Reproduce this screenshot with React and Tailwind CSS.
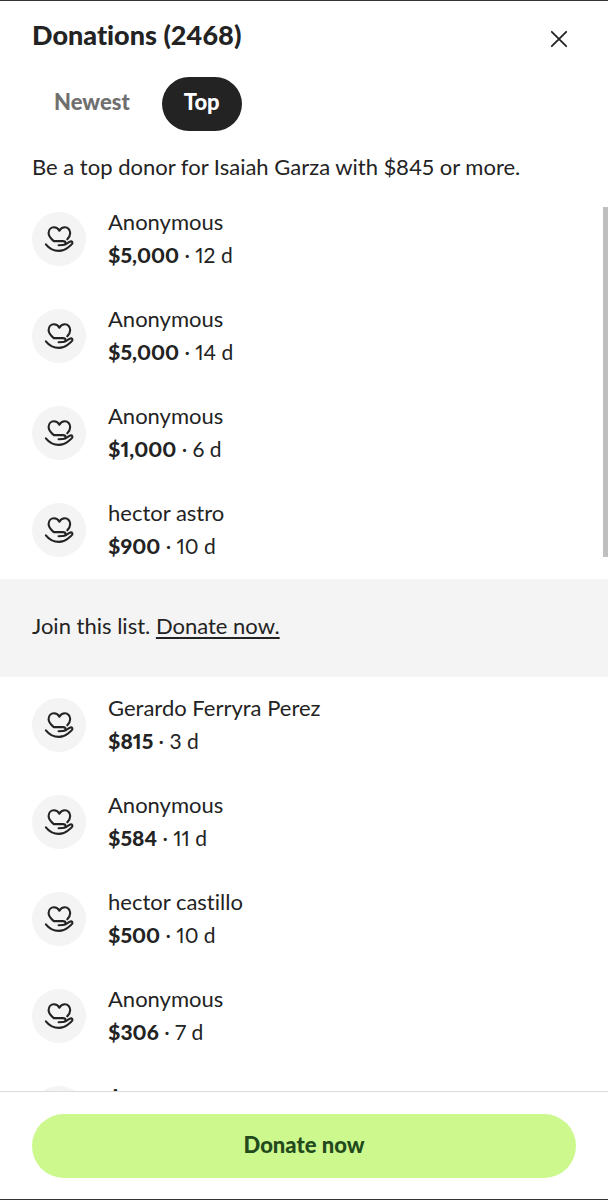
import React, { useState } from "react";

const topDonations = [
  { id: 1, name: "Anonymous", amount: "$5,000", age: "12 d" },
  { id: 2, name: "Anonymous", amount: "$5,000", age: "14 d" },
  { id: 3, name: "Anonymous", amount: "$1,000", age: "6 d" },
  { id: 4, name: "hector astro", amount: "$900", age: "10 d" },
];

const otherDonations = [
  { id: 5, name: "Gerardo Ferryra Perez", amount: "$815", age: "3 d" },
  { id: 6, name: "Anonymous", amount: "$584", age: "11 d" },
  { id: 7, name: "hector castillo", amount: "$500", age: "10 d" },
  { id: 8, name: "Anonymous", amount: "$306", age: "7 d" },
  { id: 9, name: "Anonymous", amount: "$300", age: "9 d" },
];

function HeartHandIcon() {
  return (
    <svg
      viewBox="0 0 32 32"
      className="size-8"
      fill="none"
      stroke="currentColor"
      strokeWidth="2.1"
      strokeLinecap="round"
      strokeLinejoin="round"
      aria-hidden="true"
    >
      <path d="M24.300 16.300c1.900-2 2.900-3.700 2.900-6.200 0-3.400-2.300-5.800-5.300-5.800-2.300 0-4.400 1.300-5.500 3.400-1.100-2.100-3.200-3.400-5.500-3.400-3 0-5.300 2.400-5.300 5.800 0 3.200 2 5.500 5.200 8h9c1.900 0 2.800.7 2.800 1.900s-1 1.900-2.700 2l-4.300.2" />
      <path d="M22.800 21.100l3.700-2.300c1.300-.7 2.400-.6 2.800.3.400.9 0 1.800-1 2.600l-3.600 3c-2.600 2.100-5.200 3.200-8.700 3.200-5.600 0-9.700-2.300-13.100-6.600" />
    </svg>
  );
}

function CloseIcon() {
  return (
    <svg viewBox="0 0 24 24" className="size-6" fill="none" stroke="currentColor" strokeWidth="1.8" strokeLinecap="round" aria-hidden="true">
      <path d="M4.800 4.800l14.400 14.400M19.200 4.800l-14.400 14.400" />
    </svg>
  );
}

function DonationRow({ donation }) {
  return (
    <li className="flex min-h-[97px] items-center gap-[22px] px-8 pb-[2px]">
      <span className="flex size-[54px] shrink-0 items-center justify-center rounded-full bg-[#f4f4f4]">
        <HeartHandIcon />
      </span>
      <div className="pb-[2px] leading-[33px]">
        <p>{donation.name}</p>
        <p className="text-[21px] leading-[33px]">
          <strong className="font-black">{donation.amount}</strong> · {donation.age}
        </p>
      </div>
    </li>
  );
}

function DonationList({ donations }) {
  return (
    <ul>
      {donations.map((donation) => (
        <DonationRow key={donation.id} donation={donation} />
      ))}
    </ul>
  );
}

function TabButton({ active, onClick, children }) {
  return (
    <button
      type="button"
      aria-pressed={active}
      onClick={onClick}
      className={`rounded-full px-[22px] pb-1 leading-[50px] font-black ${
        active ? "bg-[#232323] text-white" : "text-[#6f6f6f]"
      }`}
    >
      {children}
    </button>
  );
}

function App() {
  const [tab, setTab] = useState("top");

  return (
    <div className="flex h-screen flex-col border-t border-b border-[#333] bg-white font-['Lato',sans-serif] text-[22px] text-[#232323] proportional-nums [font-variant-ligatures:none]">
      <header className="flex items-center justify-between px-8 pt-[18px]">
        <h1 className="self-start text-[27px] leading-8 font-black">Donations (2468)</h1>
        <button type="button" aria-label="Close" className="px-[5px] py-2">
          <CloseIcon />
        </button>
      </header>

      <div className="flex gap-[10px] px-8 pt-[18px]">
        <TabButton active={tab === "newest"} onClick={() => setTab("newest")}>
          Newest
        </TabButton>
        <TabButton active={tab === "top"} onClick={() => setTab("top")}>
          Top
        </TabButton>
      </div>

      <p className="px-8 pt-5 pb-2 leading-8">Be a top donor for Isaiah Garza with $845 or more.</p>

      <main className="relative min-h-0 grow">
        <div className="h-full overflow-y-auto [scrollbar-width:none]">
          <DonationList donations={topDonations} />
          <p className="bg-[#f4f4f4] px-8 pt-[30px] pb-[34px] leading-[34px]">
            Join this list.{" "}
            <a href="#donate" className="underline decoration-2 underline-offset-3">
              Donate now.
            </a>
          </p>
          <DonationList donations={otherDonations} />
        </div>
        {/* scroll thumb */}
        <div className="absolute top-4 right-0 h-[350px] w-[5px] bg-[#bfbfbf]" />
      </main>

      <footer className="border-t border-[#dcdcdc] px-8 pt-[22px] pb-[21px]">
        <button type="button" className="w-full rounded-full bg-[#ccf88e] pb-[2px] leading-[62px] font-black text-[#234a1c]">
          Donate now
        </button>
      </footer>
    </div>
  );
}

export default App;
